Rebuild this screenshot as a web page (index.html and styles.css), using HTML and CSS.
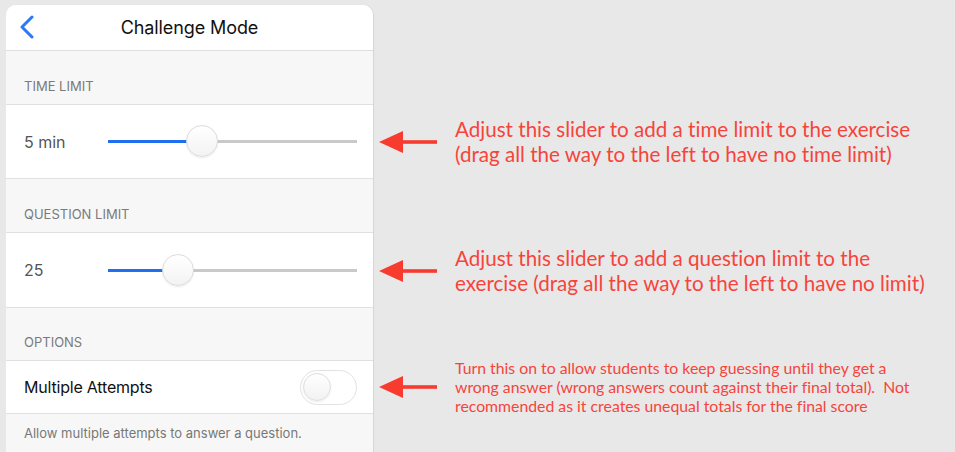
FILE: index.html
```html
<!DOCTYPE html>
<html>
<head>
<meta charset="utf-8">
<link rel="stylesheet" href="styles.css">
</head>
<body>
<div class="page">
  <div class="panel">
    <div class="header">
      <svg class="back" width="16" height="24" viewBox="0 0 16 24"><path d="M13 2 L3 12 L13 22" fill="none" stroke="#2a7af5" stroke-width="3" stroke-linecap="round" stroke-linejoin="round"/></svg>
      <div class="title">Challenge Mode</div>
    </div>
    <div class="section s1">TIME LIMIT</div>
    <div class="row slider-row">
      <div class="label">5 min</div>
      <div class="track">
        <div class="fill" style="width:94px"></div>
        <div class="thumb" style="left:94px"></div>
        <div class="rest"></div>
      </div>
    </div>
    <div class="section s2">QUESTION LIMIT</div>
    <div class="row slider-row r2">
      <div class="label">25</div>
      <div class="track">
        <div class="fill" style="width:70px"></div>
        <div class="thumb" style="left:70px"></div>
        <div class="rest"></div>
      </div>
    </div>
    <div class="section s3">OPTIONS</div>
    <div class="row toggle-row">
      <div class="label dark">Multiple Attempts</div>
      <div class="toggle"><div class="knob"></div></div>
    </div>
    <div class="footer">Allow multiple attempts to answer a question.</div>
  </div>
  <div class="notes">
    <div class="note n1">
      <svg class="arrow" width="58" height="24" viewBox="0 0 58 24"><polygon points="0,12 24,1 24,23" fill="#f73b2e"/><rect x="22" y="10.2" width="36" height="3.6" fill="#f73b2e"/></svg>
      <div class="text big">Adjust this slider to add a time limit to the exercise<br>(drag all the way to the left to have no time limit)</div>
    </div>
    <div class="note n2">
      <svg class="arrow" width="58" height="24" viewBox="0 0 58 24"><polygon points="0,12 24,1 24,23" fill="#f73b2e"/><rect x="22" y="10.2" width="36" height="3.6" fill="#f73b2e"/></svg>
      <div class="text big">Adjust this slider to add a question limit to the<br>exercise (drag all the way to the left to have no limit)</div>
    </div>
    <div class="note n3">
      <svg class="arrow" width="58" height="24" viewBox="0 0 58 24"><polygon points="0,12 24,1 24,23" fill="#f73b2e"/><rect x="22" y="10.2" width="36" height="3.6" fill="#f73b2e"/></svg>
      <div class="text small">Turn this on to allow students to keep guessing until they get a<br>wrong answer (wrong answers count against their final total).&nbsp; Not<br>recommended as it creates unequal totals for the final score</div>
    </div>
  </div>
</div>
</body>
</html>
```

FILE: styles.css
```css
html, body {
  margin: 0;
  padding: 0;
  background: #e8e8e8;
  overflow: hidden;
  height: 452px;
}
.page {
  display: flex;
  padding: 5px 0 0 6px;
  font-family: Inter, "Liberation Sans", sans-serif;
}
.panel {
  width: 367px;
  flex: none;
  background: #f7f7f7;
  border-radius: 10px 10px 0 0;
  box-shadow: 1px 0 1px rgba(0,0,0,0.08);
  overflow: hidden;
  height: 460px;
}
.header {
  height: 45px;
  background: #fff;
  border-bottom: 1px solid #dedede;
  display: flex;
  align-items: center;
  justify-content: center;
  position: relative;
}
.back {
  position: absolute;
  left: 13px;
  top: 10px;
}
.title {
  font-size: 18px;
  color: #111;
  letter-spacing: -0.1px;
}
.section {
  font-size: 13px;
  color: #7a7a7a;
  padding-left: 18px;
  display: flex;
  align-items: flex-end;
  box-sizing: border-box;
  border-bottom: 1px solid #e0e0e0;
  padding-bottom: 10px;
}
.s1 { height: 54px; }
.s2 { height: 54px; }
.s3 { height: 53px; }
.row {
  background: #fff;
  display: flex;
  align-items: center;
  padding: 0 16px 0 18px;
  border-bottom: 1px solid #e0e0e0;
  box-sizing: border-box;
}
.slider-row { height: 74px; }
.slider-row.r2 { height: 75px; }
.toggle-row { height: 53px; justify-content: space-between; }
.label {
  width: 84px;
  flex: none;
  font-size: 16px;
  color: #555;
}
.label.dark { color: #111; width: auto; letter-spacing: -0.2px; }
.track {
  flex: 1;
  height: 3px;
  display: flex;
  position: relative;
}
.fill { background: #1f6ff0; height: 3px; }
.rest { flex: 1; background: #c9c9c9; height: 3px; }
.thumb {
  position: absolute;
  top: -15px;
  width: 32px;
  height: 32px;
  margin-left: -16px;
  border-radius: 50%;
  background: linear-gradient(#ffffff, #f3f3f3);
  border: 1px solid #dcdcdc;
  box-sizing: border-box;
  box-shadow: 0 1px 2px rgba(0,0,0,0.08);
}
.toggle {
  width: 57px;
  height: 35px;
  border: 1.5px solid #e2e2e2;
  border-radius: 18px;
  box-sizing: border-box;
  background: #fff;
  display: flex;
  align-items: center;
  padding-left: 2px;
}
.knob {
  width: 28px;
  height: 28px;
  border-radius: 50%;
  background: linear-gradient(#ffffff, #f2f2f2);
  border: 1px solid #dedede;
  box-sizing: border-box;
  box-shadow: 0 1px 2px rgba(0,0,0,0.08);
}
.footer {
  font-size: 13px;
  color: #777;
  padding: 11px 0 0 18px;
}
.notes {
  display: flex;
  flex-direction: column;
  padding-left: 6px;
}
.note {
  display: flex;
  align-items: center;
}
.arrow { flex: none; margin-right: 18px; }
.text {
  font-family: Lato, "Open Sans", sans-serif;
  color: #f6443b;
  white-space: nowrap;
  font-variant-ligatures: none;
  font-feature-settings: "liga" 0, "dlig" 0;
}
.big { font-size: 20.6px; line-height: 25px; }
.small { font-size: 15.8px; line-height: 19px; }
.n1 { margin-top: 112px; }
.n2 { margin-top: 79px; }
.n3 { margin-top: 62px; }
```
